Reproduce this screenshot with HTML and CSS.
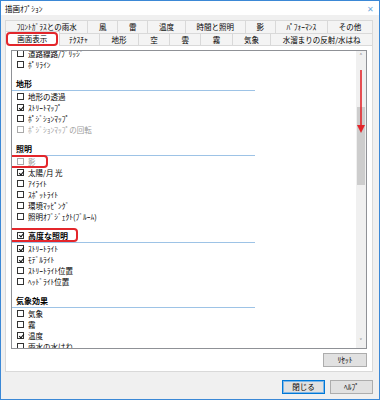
FILE: index.html
```html
<!DOCTYPE html>
<html lang="ja">
<head>
    <meta charset="UTF-8">
    <title>描画オプション</title>
    <link rel="stylesheet" href="styles.css">
</head>
<body>
<div class="window">
    <div class="titlebar">
        <span class="title">描画ｵﾌﾟｼｮﾝ</span>
        <span class="close">✕</span>
    </div>

    <div class="tabs">
        <div class="tab-row back">
            <div class="tab">ﾌﾛﾝﾄｶﾞﾗｽとの雨水</div>
            <div class="tab">風</div>
            <div class="tab">雷</div>
            <div class="tab">温度</div>
            <div class="tab">時間と照明</div>
            <div class="tab">影</div>
            <div class="tab">ﾊﾟﾌｫｰﾏﾝｽ</div>
            <div class="tab">その他</div>
        </div>
        <div class="tab-row front">
            <div class="tab active"><span class="mark tab-mark">画面表示</span></div>
            <div class="tab">ﾃｸｽﾁｬ</div>
            <div class="tab">地形</div>
            <div class="tab">空</div>
            <div class="tab">雲</div>
            <div class="tab">霧</div>
            <div class="tab">気象</div>
            <div class="tab">水溜まりの反射/水はね</div>
        </div>
    </div>

    <div class="panel">
        <div class="list">
            <div class="list-body">
                <div class="item first"><span class="box"></span>道路線路/ﾌﾞﾘｯｼﾞ</div>
                <div class="item"><span class="box"></span>ﾎﾟﾘﾗｲﾝ</div>

                <div class="heading">地形</div>
                <div class="item"><span class="box"></span>地形の透過</div>
                <div class="item"><span class="box on"></span>ｽﾄﾘｰﾄﾏｯﾌﾟ</div>
                <div class="item"><span class="box"></span>ﾎﾟｼﾞｼｮﾝﾏｯﾌﾟ</div>
                <div class="item off"><span class="box"></span>ﾎﾟｼﾞｼｮﾝﾏｯﾌﾟの回転</div>

                <div class="heading">照明</div>
                <div class="item off"><span class="mark item-mark"><span class="box"></span>影</span></div>
                <div class="item"><span class="box on"></span>太陽/月 光</div>
                <div class="item"><span class="box"></span>ｱｲﾗｲﾄ</div>
                <div class="item"><span class="box"></span>ｽﾎﾟｯﾄﾗｲﾄ</div>
                <div class="item"><span class="box"></span>環境ﾏｯﾋﾟﾝｸﾞ</div>
                <div class="item"><span class="box"></span>照明ｵﾌﾞｼﾞｪｸﾄ(ﾌﾞﾙｰﾑ)</div>

                <div class="heading check"><span class="mark head-mark"><span class="box on"></span>高度な照明</span></div>
                <div class="item"><span class="box on"></span>ｽﾄﾘｰﾄﾗｲﾄ</div>
                <div class="item"><span class="box on"></span>ﾓﾃﾞﾙﾗｲﾄ</div>
                <div class="item"><span class="box"></span>ｽﾄﾘｰﾄﾗｲﾄ位置</div>
                <div class="item"><span class="box"></span>ﾍｯﾄﾞﾗｲﾄ位置</div>

                <div class="heading">気象効果</div>
                <div class="item"><span class="box"></span>気象</div>
                <div class="item"><span class="box"></span>霧</div>
                <div class="item"><span class="box on"></span>温度</div>
                <div class="item"><span class="box"></span>雨水の水はね</div>
            </div>

            <div class="scrollbar">
                <div class="arrow">&#x2C4;</div>
                <div class="track"><div class="thumb"></div></div>
                <div class="arrow">&#x2C5;</div>
                <!-- red hint arrow drawn over the scrollbar -->
                <svg class="hint" width="10" height="64" viewBox="0 0 10 64">
                    <line x1="5" y1="0" x2="5" y2="56" stroke="#e3262b" stroke-width="1.6"/>
                    <polygon points="1,55 9,55 5,63" fill="#e3262b"/>
                </svg>
            </div>
        </div>
        <div class="panel-foot">
            <button class="btn">ﾘｾｯﾄ</button>
        </div>
    </div>

    <div class="footer">
        <button class="btn default">閉じる</button>
        <button class="btn">ﾍﾙﾌﾟ</button>
    </div>
</div>
</body>
</html>
```

FILE: styles.css
```css
* {
    box-sizing: border-box;
}

body {
    margin: 0;
    font-family: "Noto Sans CJK JP", "Noto Sans", sans-serif;
    font-size: 7.5px;
    color: #000;
    background: #fff;
}

.window {
    width: 380px;
    height: 400px;
    border: 1px solid #3b88d6;
    background: #f0f0f0;
    display: flex;
    flex-direction: column;
}

.titlebar {
    height: 14px;
    background: #fff;
    display: flex;
    align-items: center;
    justify-content: space-between;
    padding: 0 5px 0 4px;
}

.close {
    font-size: 8px;
    color: #6aa6dc;
}

/* tabs */
.tabs {
    margin: 5px 6px 0 4px;
}

.tab-row {
    display: flex;
}

.tab-row.back {
    height: 13px;
}

.tab-row.front {
    height: 12px;
}

.tab {
    flex: 1 1 auto;
    text-align: center;
    white-space: nowrap;
    line-height: 11px;
    padding: 0 6px;
    border: 1px solid #d9d9d9;
    border-bottom: none;
    margin-left: -1px;
    background: #f4f4f4;
}

.tab:first-child {
    margin-left: 0;
}

.tab.active {
    position: relative;
    z-index: 1;
    background: #fff;
    height: 15px;
    margin: -2px -2px 0 0;
    line-height: 13px;
}

.mark {
    outline: 2px solid #e3262b;
    border-radius: 2px;
}

.tab-mark {
    display: inline-block;
    line-height: 10px;
    padding: 0 9px;
    margin: 0 -9px;
}

/* panel */
.panel {
    height: 327px;
    margin: 0 6px 0 4px;
    border: 1px solid #d9d9d9;
    background: #fff;
    padding: 4px 5px;
}

.list {
    position: relative;
    height: 299px;
    border: 1px solid #8f9196;
    display: flex;
    overflow: hidden;
}

.list-body {
    flex: 1;
    overflow: hidden;
}

.item {
    height: 11px;
    display: flex;
    align-items: center;
    padding-left: 5px;
    white-space: nowrap;
}

.item.first {
    margin-top: -3px;
}

.item.off {
    color: #9c9c9c;
}

.box {
    position: relative;
    flex: none;
    width: 7px;
    height: 7px;
    border: 1px solid #333;
    background: #fff;
    margin-right: 4px;
}

.item.off .box {
    border-color: #aaa;
}

.box.on::after {
    content: "";
    position: absolute;
    left: 1.5px;
    top: -0.5px;
    width: 2px;
    height: 4px;
    border: solid #111;
    border-width: 0 1.2px 1.2px 0;
    transform: rotate(40deg);
}

.heading {
    width: 243px;
    height: 21px;
    display: flex;
    align-items: flex-end;
    padding: 0 0 1px 4px;
    border-bottom: 1px solid #9dc3e6;
    font-weight: bold;
    font-size: 8px;
    line-height: 11px;
}

.heading.check {
    padding-left: 5px;
    padding-bottom: 2px;
}

.item-mark,
.head-mark {
    display: inline-flex;
    align-items: center;
    height: 9px;
    padding: 0 10px 0 8px;
    margin-left: -8px;
}

.head-mark {
    height: 10px;
    padding-right: 8px;
}

/* scrollbar */
.scrollbar {
    position: relative;
    width: 10px;
    background: #f0f0f0;
    display: flex;
    flex-direction: column;
}

.arrow {
    height: 12px;
    text-align: center;
    line-height: 12px;
    font-size: 8px;
    color: #606060;
}

.track {
    flex: 1;
}

.thumb {
    margin: 44px 1px 0;
    height: 78px;
    background: #cdcdcd;
}

.hint {
    position: absolute;
    left: 0;
    top: 19px;
}

.panel-foot {
    margin-top: 4px;
    display: flex;
    justify-content: flex-end;
}

/* buttons */
.btn {
    width: 44px;
    height: 14px;
    padding: 0;
    font-family: inherit;
    font-size: 7.5px;
    line-height: 12px;
    background: #e1e1e1;
    border: 1px solid #adadad;
    color: #000;
}

.btn.default {
    border-color: #0078d7;
    box-shadow: inset 0 0 0 1px #7fb6e6;
}

.footer {
    flex: 1;
    display: flex;
    justify-content: flex-end;
    align-items: flex-start;
    gap: 5px;
    padding: 8px 6px 0;
}

.footer .btn {
    width: 43px;
}
```
